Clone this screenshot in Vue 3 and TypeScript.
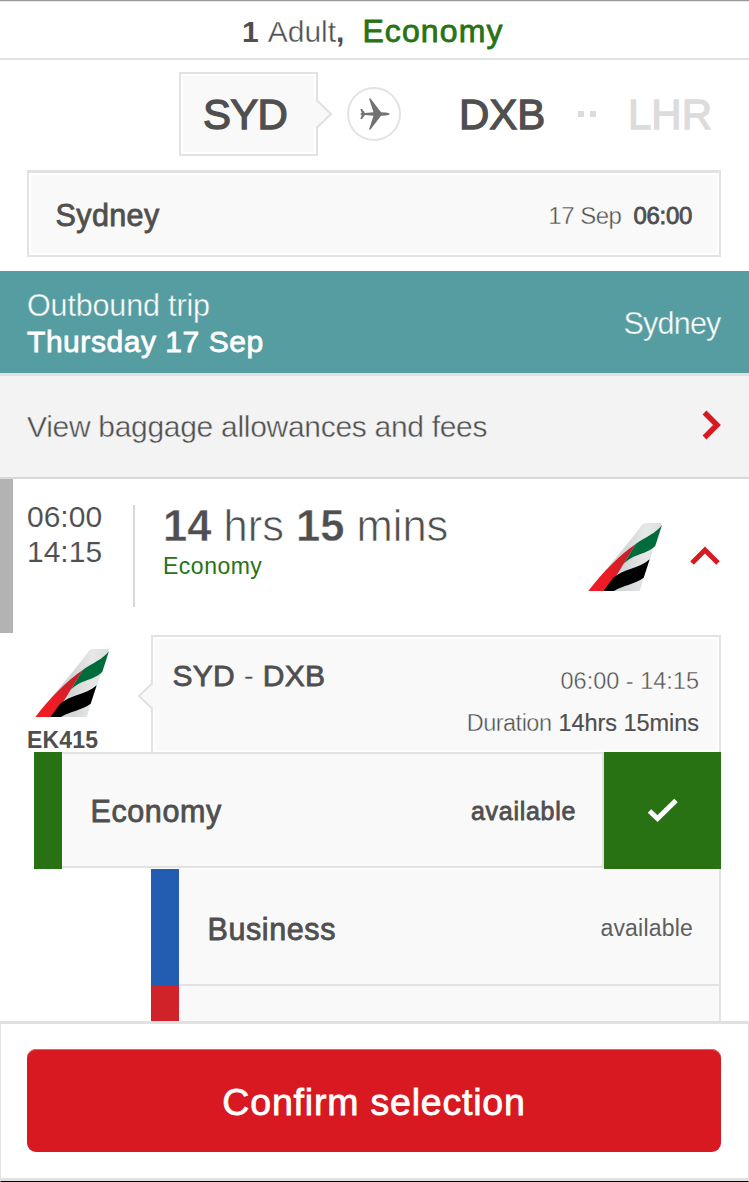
<script setup lang="ts">
import { ref } from 'vue'

interface Cabin {
  name: string
  tone: string
}

const selected = ref<string>('Economy')
const cabin: Cabin = { name: 'Economy', tone: 'green' }
const business: Cabin = { name: 'Business', tone: 'blue' }
</script>

<template>
  <main class="screen">
    <svg class="defs" width="0" height="0" aria-hidden="true">
      <defs>
        <linearGradient id="tailGrey" x1="0" y1="0" x2="1" y2="0">
          <stop offset="0.5" stop-color="#d3d6d7" />
          <stop offset="0.78" stop-color="#e6e8e8" />
          <stop offset="1" stop-color="#dcdedf" />
        </linearGradient>
        <linearGradient id="tailRed" x1="0" y1="1" x2="1" y2="0">
          <stop offset="0.35" stop-color="#ee1c24" />
          <stop offset="1" stop-color="#b3232a" />
        </linearGradient>
        <symbol id="tail" viewBox="0 0 223 204">
          <path d="M0 204C50 142 112 72 160 7Q165 0 174 0H221L154 204Z" fill="url(#tailGrey)" />
          <path d="M221 6L201 68C178 94 132 92 105 124L143 62C172 42 204 30 221 6Z" fill="#006b3b" />
          <path d="M0 204C48 142 94 96 143 62L105 124Q78 172 45 204Z" fill="url(#tailRed)" />
          <path d="M184 109L166 164C140 184 104 186 77 204H45L74 165C104 138 152 138 184 109Z" fill="#000" />
        </symbol>
      </defs>
    </svg>

    <header class="summary">
      <span class="count">1</span>
      <span class="adult light">Adult</span>
      <span class="comma">,</span>
      <span class="cabin-name medium">Economy</span>
    </header>

    <nav class="route">
      <div class="stop-current">
        <span class="code current medium">SYD</span>
        <svg class="notch" width="18" height="34" viewBox="0 0 18 34">
          <path d="M-3 3H1L15 17L1 31H-3Z" fill="#f9f9f9" />
          <path d="M1 0V3.500L15 17L1 30.500V34" fill="none" stroke="#e2e2e2" stroke-width="2.2" />
        </svg>
      </div>
      <span class="plane">
        <svg width="31" height="32" viewBox="0 0 31 32">
          <path d="M30.5 16C30.5 15 28.5 14.600 26.500 14.500L22 14.200L11.500 0.500H10L14.500 14.300L6 15L3 11H1.300L2.800 15L0.800 16L2.800 17L1.300 21H3L6 17L14.500 17.700L10 31.500H11.500L22 17.800L26.500 17.500C28.500 17.400 30.500 17 30.500 16Z" fill="#727272" />
        </svg>
      </span>
      <span class="code dxb medium">DXB</span>
      <span class="dots"><i></i><i></i></span>
      <span class="code lhr medium">LHR</span>
    </nav>

    <section class="origin">
      <span class="city medium">Sydney</span>
      <span class="date light">17 Sep</span>
      <span class="hour medium">06:00</span>
    </section>

    <section class="trip">
      <div>
        <div class="trip-label light">Outbound trip</div>
        <div class="trip-day medium">Thursday 17 Sep</div>
      </div>
      <span class="trip-city light">Sydney</span>
    </section>

    <a class="baggage">
      <span class="baggage-text light">View baggage allowances and fees</span>
      <svg width="19" height="31" viewBox="0 0 19 31">
        <path d="M2.500 2.500L15 15L2.500 27.500" fill="none" stroke="#d81921" stroke-width="5.500" />
      </svg>
    </a>

    <section class="option">
      <div class="times light"><div>06:00</div><div>14:15</div></div>
      <div class="total">
        <div class="length light"><b>14</b> hrs <b>15</b> mins</div>
        <div class="fare">Economy</div>
      </div>
      <svg class="tail" width="75" height="68"><use href="#tail" /></svg>
      <svg class="up" width="31" height="21" viewBox="0 0 31 21">
        <path d="M2 18L15 5L28 18" fill="none" stroke="#d81921" stroke-width="5" />
      </svg>
    </section>

    <section class="flight">
      <div class="carrier">
        <svg class="tail" width="75" height="68"><use href="#tail" /></svg>
        <div class="number">EK415</div>
      </div>
      <div class="leg">
        <svg class="leg-notch" width="18" height="32" viewBox="0 0 18 32">
          <path d="M20 3H16L2.500 16L16 29H20Z" fill="#f9f9f9" />
          <path d="M15 0V3.500L2 16L15 28.500V32" fill="none" stroke="#e2e2e2" stroke-width="2.200" />
        </svg>
        <div class="pair medium">SYD <span class="light">-</span> DXB</div>
        <div class="leg-info">
          <div class="leg-times light">06:00 - 14:15</div>
          <div class="leg-duration"><span class="light">Duration</span><span class="amount">14hrs 15mins</span></div>
        </div>
      </div>
    </section>

    <section class="cabin picked" @click="selected = cabin.name">
      <i class="swatch" :class="cabin.tone"></i>
      <div class="cabin-body">
        <span class="cabin-label medium">{{ cabin.name }}</span>
        <span class="status-strong medium">available</span>
      </div>
      <div class="tick">
        <svg width="32" height="26" viewBox="0 0 32 26">
          <path d="M2.500 13L10.500 20.500L29 2.500" fill="none" stroke="#fff" stroke-width="5" />
        </svg>
      </div>
    </section>

    <section class="cabin other" @click="selected = business.name">
      <i class="swatch" :class="business.tone"></i>
      <div class="cabin-body">
        <span class="cabin-label medium">{{ business.name }}</span>
        <span class="status">available</span>
      </div>
    </section>

    <section class="cabin next">
      <i class="swatch red"></i>
      <div class="cabin-body"></div>
    </section>

    <footer class="footer">
      <button class="confirm medium">Confirm selection</button>
    </footer>
  </main>
</template>

<style>
body {
  margin: 0;
  background: #fff;
}
</style>

<style scoped>
.screen {
  --bg: #fff;
  display: flex;
  flex-direction: column;
  width: 749px;
  height: 1182px;
  overflow: hidden;
  box-sizing: border-box;
  background: #fff;
  color: #4f4f4f;
  font-family: "Liberation Sans", Arial, sans-serif;
  font-size: 30px;
  line-height: 36px;
  white-space: nowrap;
}
.screen * {
  box-sizing: border-box;
}
.defs {
  position: absolute;
}
.medium {
  -webkit-text-stroke: 0.8px currentColor;
}
.light {
  -webkit-text-stroke: 0.4px var(--bg);
}
.summary {
  display: flex;
  align-items: baseline;
  height: 60px;
  padding: 12px 0 0 242px;
  border-top: 1px solid #999;
  border-bottom: 2px solid #e2e2e2;
  box-shadow: inset 0 1px #e6e6e6;
}
.count {
  font-weight: bold;
  margin-right: 9px;
}
.comma {
  font-weight: bold;
}
.cabin-name {
  margin-left: 18px;
  font-size: 32px;
  letter-spacing: 1.1px;
  color: #297214;
}
.route {
  display: flex;
  align-items: center;
  height: 110px;
  padding: 0 0 2px 179px;
}
.stop-current {
  --bg: #f9f9f9;
  position: relative;
  width: 139px;
  height: 84px;
  padding: 17px 0 0 22px;
  border: 2.5px solid #e2e2e2;
  background: #f9f9f9;
  box-shadow: inset 0 0 0 2px #fff;
}
.notch {
  position: absolute;
  left: 135px;
  top: 23px;
  overflow: visible;
}
.code {
  font-size: 42px;
  line-height: 48px;
  -webkit-text-stroke-width: 1.3px;
}
.current {
  letter-spacing: -0.8px;
}
.plane {
  display: flex;
  align-items: center;
  justify-content: center;
  width: 54px;
  height: 54px;
  margin-left: 29px;
  border: 2px solid #e2e4e4;
  border-radius: 50%;
}
.dxb {
  width: 119px;
  margin-left: 58px;
  padding-top: 2px;
}
.dots {
  display: flex;
  gap: 6px;
  width: 50px;
}
.dots i {
  width: 6px;
  height: 6px;
  background: #dcdcdc;
}
.lhr {
  padding-top: 2px;
  color: #dcdcdc;
}
.origin {
  --bg: #f9f9f9;
  display: flex;
  align-items: baseline;
  height: 87px;
  margin: 0 28px 14px 27px;
  padding: 24px 27px 0 26.500px;
  border: 2px solid #e2e2e2;
  border-top-width: 3px;
  background: #f9f9f9;
  box-shadow: inset 0 0 0 2px #fff;
}
.city {
  flex: 1;
  font-size: 30.500px;
  letter-spacing: 0.4px;
}
.date {
  position: relative;
  top: -2px;
  font-size: 24px;
  letter-spacing: -0.5px;
  margin-right: 12px;
}
.hour {
  position: relative;
  top: -2px;
  font-size: 24px;
  letter-spacing: -0.300px;
}
.trip {
  --bg: #559da1;
  display: flex;
  justify-content: space-between;
  height: 102px;
  padding: 16px 28.500px 0 27px;
  background: #559da1;
  color: #fff;
}
.trip-label {
  font-size: 30.500px;
  letter-spacing: -0.150px;
}
.trip-day {
  padding-top: 1px;
  letter-spacing: 0.550px;
}
.trip-city {
  font-size: 30.500px;
  letter-spacing: -0.8px;
  padding-top: 18px;
}
.baggage {
  --bg: #f3f3f3;
  display: flex;
  align-items: center;
  justify-content: space-between;
  height: 106px;
  padding: 0 28px 2px 27px;
  border-top: 3px solid #e1e1e1;
  border-bottom: 2px solid #d8d8d8;
  background: #f3f3f3;
}
.baggage-text {
  padding-top: 3px;
  letter-spacing: -0.3px;
}
.option {
  display: flex;
  height: 154px;
  border-left: 13px solid #b3b3b3;
}
.times {
  width: 122px;
  height: 102px;
  margin-top: 26px;
  padding: 0 0 0 14px;
  border-right: 2px solid #d8d8d8;
  line-height: 35px;
  margin-right: 28px;
  -webkit-text-stroke-width: 0.1px;
}
.times div:first-child {
  margin-top: -6px;
}
.total {
  width: 425px;
  padding-top: 23px;
}
.length {
  font-size: 43.500px;
  line-height: 48px;
  -webkit-text-stroke-width: 0.7px;
}
.length b {
  -webkit-text-stroke-width: 0.4px;
}
.fare {
  margin-top: 1px;
  font-size: 23px;
  line-height: 30px;
  letter-spacing: 0.5px;
  color: #297214;
}
.option .tail {
  margin-top: 44px;
}
.up {
  margin: 66px 0 0 27px;
}
.flight {
  display: flex;
  margin-top: 2px;
  height: 117px;
}
.carrier {
  width: 151px;
  padding: 14px 0 0 27px;
}
.carrier .tail {
  display: block;
  margin-left: 8px;
}
.number {
  margin-top: 8px;
  font-size: 23px;
  line-height: 30px;
  font-weight: bold;
  letter-spacing: 0.200px;
}
.leg {
  --bg: #f9f9f9;
  position: relative;
  display: flex;
  justify-content: space-between;
  width: 570px;
  padding: 20px 20px 0 19.500px;
  border: 2px solid #e2e2e2;
  border-bottom: 0;
  background: #f9f9f9;
  box-shadow: inset 0 0 0 2px #fff;
}
.leg-notch {
  position: absolute;
  left: -16px;
  top: 43px;
  overflow: visible;
}
.pair {
  padding-top: 1px;
  letter-spacing: 0.3px;
}
.leg-info {
  font-size: 23.500px;
  line-height: 42px;
  text-align: right;
  padding-top: 3px;
}
.leg-duration .light {
  letter-spacing: -0.5px;
  margin-right: 7px;
}
.amount {
  -webkit-text-stroke: 0.2px currentColor;
  letter-spacing: -0.050px;
}
.cabin {
  --bg: #f9f9f9;
  display: flex;
  flex: none;
}
.swatch {
  width: 28px;
}
.green {
  background: #297214;
}
.blue {
  background: #235db2;
}
.red {
  background: #d02329;
}
.cabin-body {
  display: flex;
  flex: 1;
  justify-content: space-between;
  align-items: center;
  background: #f9f9f9;
  border-right: 2px solid #e2e2e2;
  border-bottom: 2px solid #e2e2e2;
  padding: 0 26px 0 28.500px;
}
.picked {
  height: 117px;
  margin: 0 28px 0 34px;
}
.picked .cabin-body {
  border-top: 2px solid #e2e2e2;
  margin-bottom: 1px;
}
.cabin-label {
  font-size: 30.500px;
  letter-spacing: 0.6px;
}
.picked .cabin-label {
  padding-top: 2px;
}
.status-strong {
  padding-top: 1px;
  font-size: 25px;
  letter-spacing: 0.7px;
}
.status {
  font-size: 23px;
  letter-spacing: 0.2px;
  color: #5e5e5e;
}
.tick {
  display: flex;
  align-items: center;
  justify-content: center;
  width: 117px;
  background: #297214;
}
.other {
  height: 117px;
  margin: 0 28px 0 151px;
}
.other .cabin-label {
  padding-top: 4px;
}
.other .status {
  padding-top: 2px;
}
.next {
  height: 35px;
  margin: 0 28px 0 151px;
}
.next .cabin-body {
  border-bottom: 0;
}
.footer {
  height: 161px;
  padding: 25px 27px 0 26px;
  border: 1px solid #e1e1e1;
  border-top-width: 3px;
  border-bottom: 1px solid #000;
  box-shadow: inset 0 -3px #e1e1e1;
}
.confirm {
  display: block;
  width: 694px;
  height: 103px;
  padding: 3px 0 0;
  border: 0;
  border-radius: 9px;
  background: #d81921;
  box-shadow: inset 0 1px #df6268;
  color: #fff;
  font-family: inherit;
  font-size: 37.500px;
  letter-spacing: 0.800px;
}
</style>
